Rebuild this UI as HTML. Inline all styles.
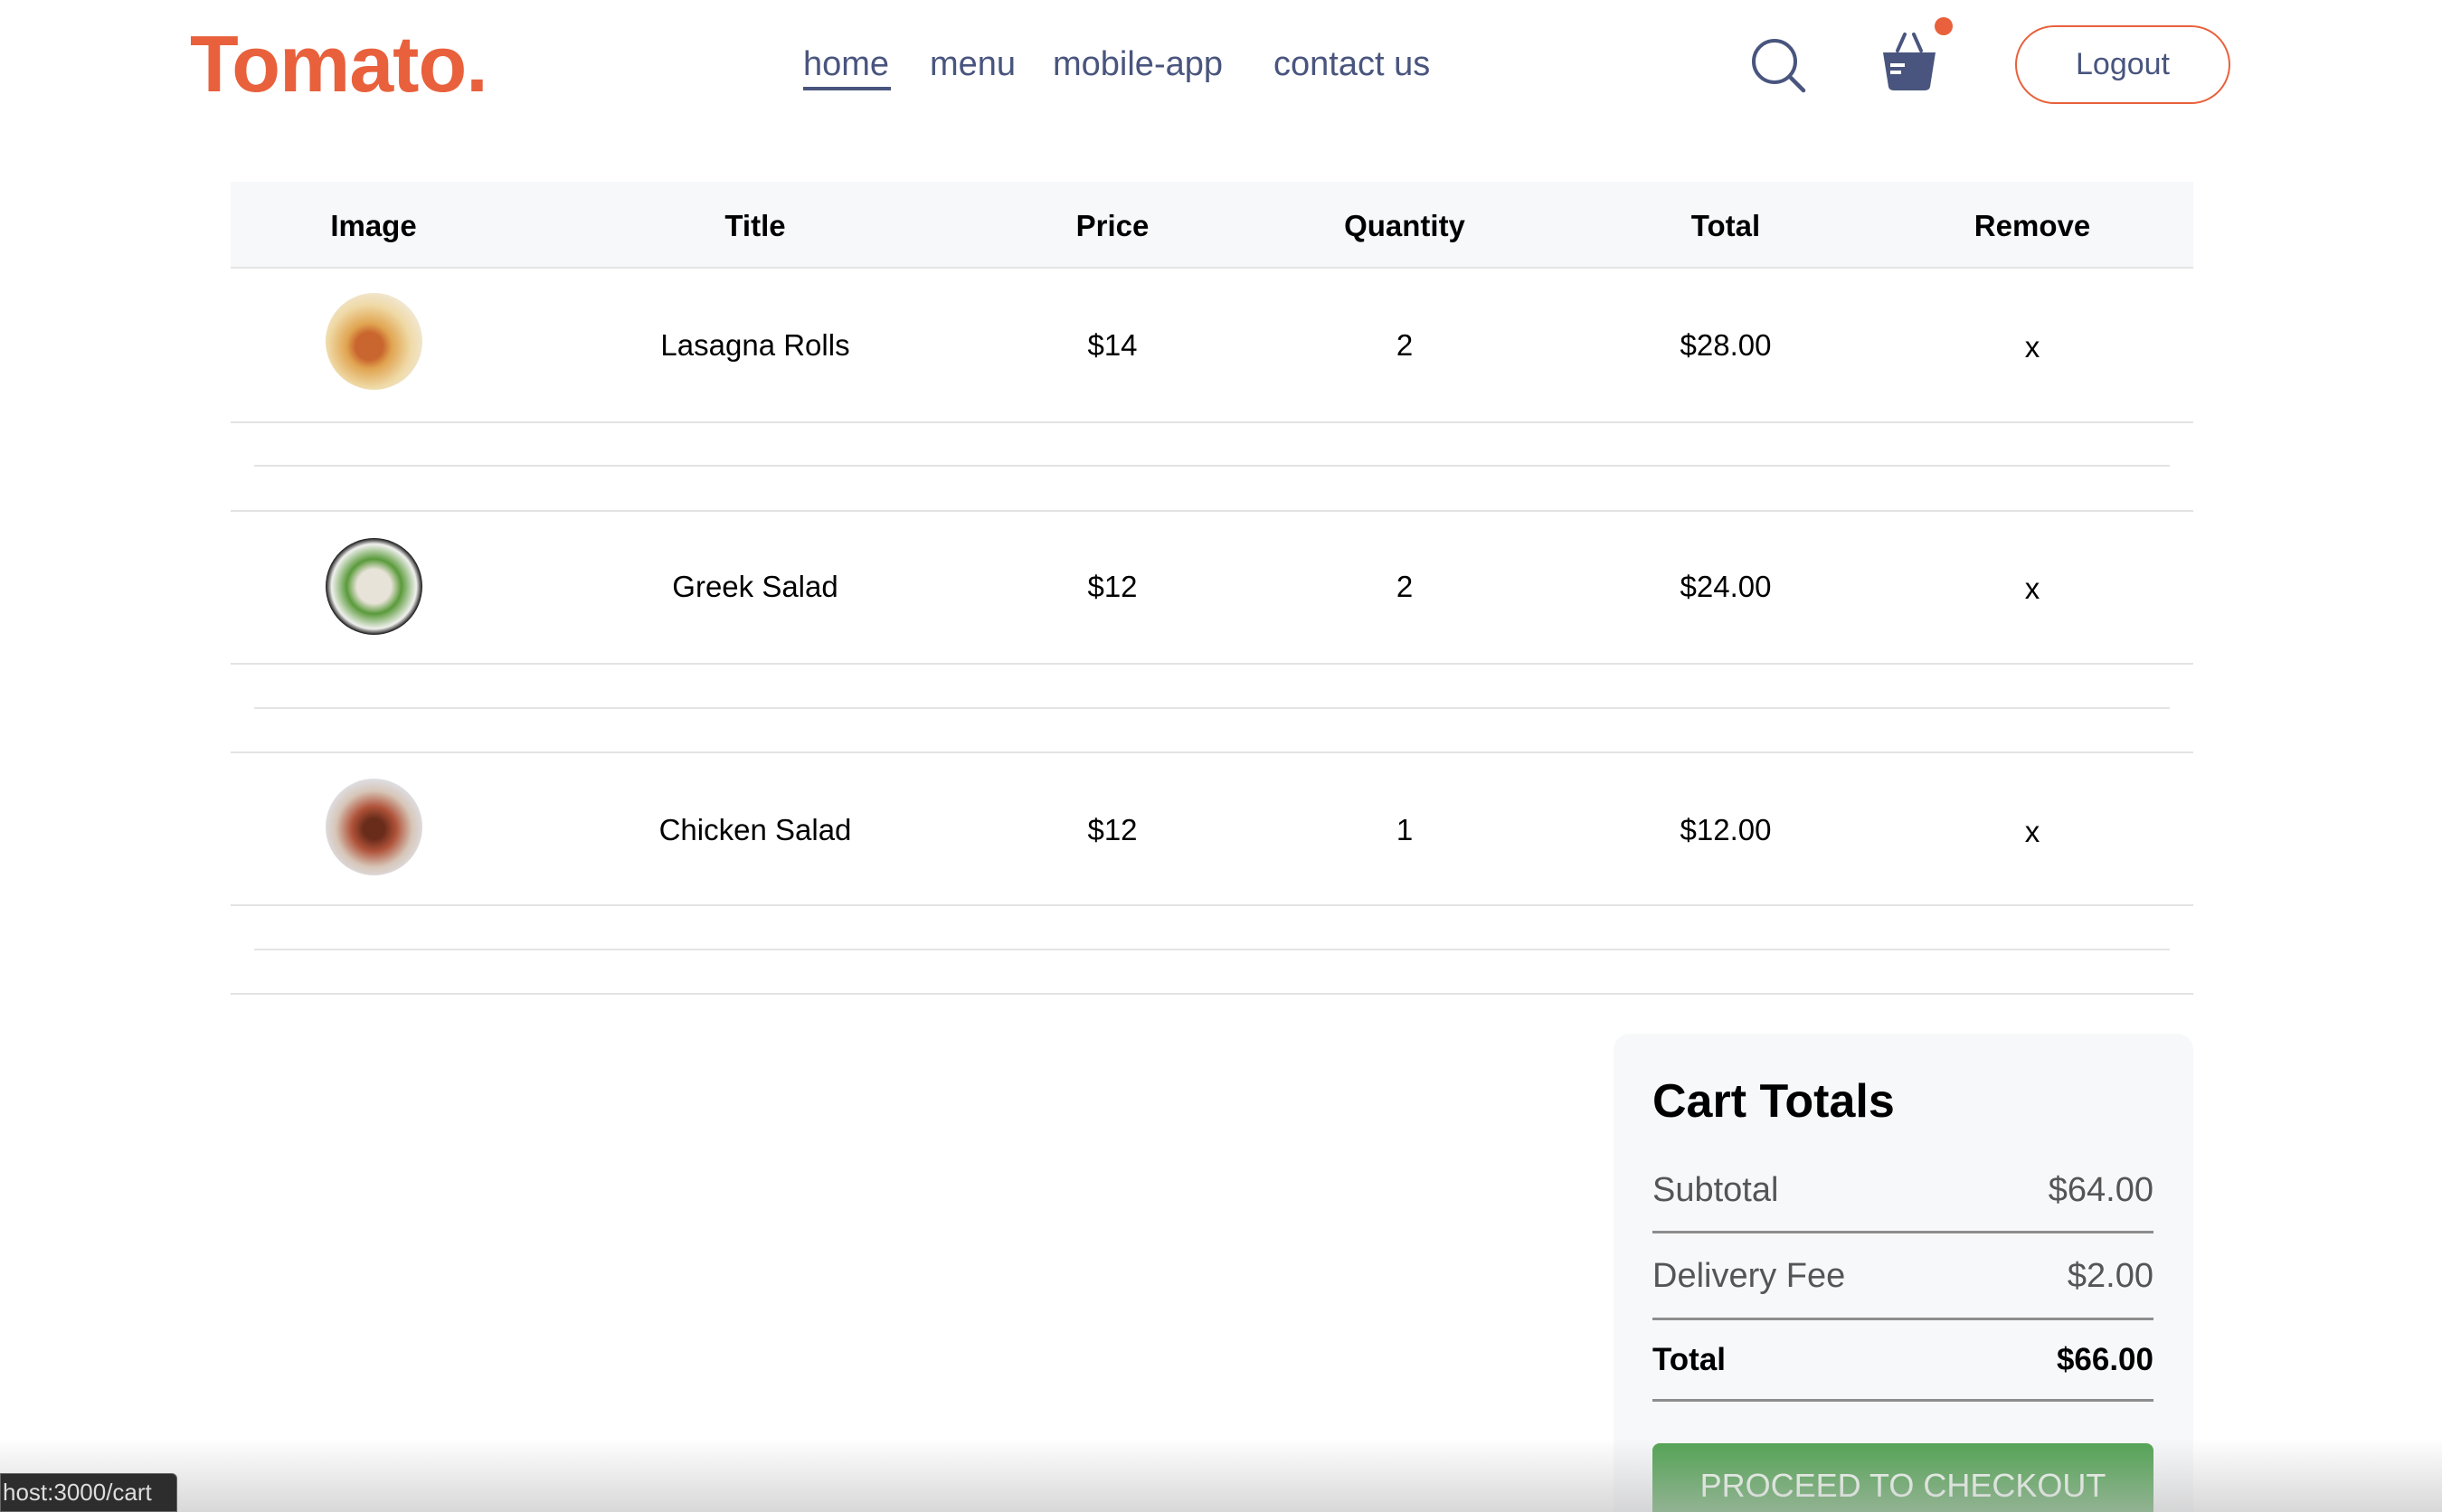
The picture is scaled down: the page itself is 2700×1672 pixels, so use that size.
<!DOCTYPE html>
<html><head><meta charset="utf-8"><style>
*{margin:0;padding:0;box-sizing:border-box}
html,body{width:2700px;height:1672px;overflow:hidden}
body{background:#fff;font-family:"Liberation Sans",sans-serif;position:relative;color:#000}
.a{position:absolute}
.logo{left:210px;top:20px;font-size:88px;font-weight:bold;color:#e8613c;letter-spacing:-1px}
.nav{top:50px;font-size:38px;color:#49557e}
.hl{position:absolute;left:255px;width:2170px;height:2px;background:#e3e3e3}
.sl{position:absolute;left:281px;width:2118px;height:2px;background:#e3e3e3}
.c{position:absolute;transform:translate(-50%,-50%);white-space:nowrap}
.th{font-size:33px;font-weight:bold;top:250px}
.td{font-size:33px}
.img{position:absolute;width:107px;height:107px;border-radius:50%;left:360px}
.row{position:absolute;left:1827px;width:554px;display:flex;justify-content:space-between;font-size:38px;color:#555}
.rl{position:absolute;left:1827px;width:554px;height:3px;background:#8d8d8d}
</style></head><body>
<div class="a logo">Tomato.</div>
<div class="a nav" style="left:888px">home</div>
<div class="a" style="left:888px;top:96px;width:97px;height:4px;background:#49557e"></div>
<div class="a nav" style="left:1028px">menu</div>
<div class="a nav" style="left:1164px">mobile-app</div>
<div class="a nav" style="left:1408px">contact us</div>
<svg class="a" style="left:1934px;top:40px" width="64" height="64" viewBox="0 0 64 64"><circle cx="28" cy="28" r="23" fill="none" stroke="#49557e" stroke-width="4"/><line x1="45" y1="45" x2="60" y2="60" stroke="#49557e" stroke-width="4.5" stroke-linecap="round"/></svg>
<svg class="a" style="left:2080px;top:34px" width="62" height="68" viewBox="0 0 62 68"><path d="M18 22 L26 4 M44 22 L36 4" stroke="#49557e" stroke-width="4" fill="none" stroke-linecap="round"/><path d="M2 24 H60 L54 62 Q53 66 48 66 H14 Q9 66 8 62 Z" fill="#49557e"/><rect x="10" y="36" width="16" height="4" fill="#fff"/><rect x="10" y="44" width="12" height="4" fill="#fff"/></svg>
<div class="a" style="left:2139px;top:19px;width:20px;height:20px;border-radius:50%;background:#e8613c"></div>
<div class="a" style="left:2228px;top:28px;width:238px;height:87px;border:2px solid #e8613c;border-radius:44px;font-size:34px;color:#49557e;text-align:center;line-height:83px">Logout</div>

<div class="a" style="left:255px;top:201px;width:2170px;height:95px;background:#f7f8fa"></div>
<div class="hl" style="top:295px"></div>
<div class="c th" style="left:413px">Image</div>
<div class="c th" style="left:835px">Title</div>
<div class="c th" style="left:1230px">Price</div>
<div class="c th" style="left:1553px">Quantity</div>
<div class="c th" style="left:1908px">Total</div>
<div class="c th" style="left:2247px">Remove</div>

<div class="img" style="top:324px;background:radial-gradient(circle at 45% 55%,#c9652e 0 18%,#e0a450 30%,#efd9a6 55%,#f2ece0 80%)"></div>
<div class="c td" style="left:835px;top:382px">Lasagna Rolls</div>
<div class="c td" style="left:1230px;top:382px">$14</div>
<div class="c td" style="left:1553px;top:382px">2</div>
<div class="c td" style="left:1908px;top:382px">$28.00</div>
<div class="c td" style="left:2247px;top:384px">x</div>
<div class="hl" style="top:466px"></div><div class="sl" style="top:514px"></div><div class="hl" style="top:564px"></div>

<div class="img" style="top:595px;background:radial-gradient(circle at 50% 50%,#e8e3d8 0 25%,#5a9a3a 40%,#f0f0ee 62%,#222 70%,#555 85%,#888 100%)"></div>
<div class="c td" style="left:835px;top:649px">Greek Salad</div>
<div class="c td" style="left:1230px;top:649px">$12</div>
<div class="c td" style="left:1553px;top:649px">2</div>
<div class="c td" style="left:1908px;top:649px">$24.00</div>
<div class="c td" style="left:2247px;top:651px">x</div>
<div class="hl" style="top:733px"></div><div class="sl" style="top:782px"></div><div class="hl" style="top:831px"></div>

<div class="img" style="top:861px;background:radial-gradient(circle at 50% 52%,#6a2c1a 0 15%,#b0533a 32%,#d7c6b8 55%,#dfe2ea 75%)"></div>
<div class="c td" style="left:835px;top:918px">Chicken Salad</div>
<div class="c td" style="left:1230px;top:918px">$12</div>
<div class="c td" style="left:1553px;top:918px">1</div>
<div class="c td" style="left:1908px;top:918px">$12.00</div>
<div class="c td" style="left:2247px;top:920px">x</div>
<div class="hl" style="top:1000px"></div><div class="sl" style="top:1049px"></div><div class="hl" style="top:1098px"></div>

<div class="a" style="left:1784px;top:1143px;width:641px;height:529px;background:#f7f8fa;border-radius:18px 18px 0 0"></div>
<div class="a" style="left:1827px;top:1188px;font-size:52px;font-weight:bold">Cart Totals</div>
<div class="row" style="top:1295px"><span>Subtotal</span><span>$64.00</span></div>
<div class="rl" style="top:1361px"></div>
<div class="row" style="top:1390px"><span>Delivery Fee</span><span>$2.00</span></div>
<div class="rl" style="top:1457px"></div>
<div class="row" style="top:1484px;color:#000;font-weight:bold;font-size:35px"><span>Total</span><span>$66.00</span></div>
<div class="rl" style="top:1547px"></div>
<div class="a" style="left:1827px;top:1596px;width:554px;height:76px;background:#51a252;border-radius:8px 8px 0 0;color:#f0f8f0;font-size:36px;text-align:center;padding-top:26px">PROCEED TO CHECKOUT</div>
<div class="a" style="left:0;top:1590px;width:2700px;height:82px;background:linear-gradient(rgba(200,200,200,0),rgba(190,190,190,.6))"></div>
<div class="a" style="left:0;top:1629px;width:196px;height:43px;background:#2d2d2d;border:1px solid #666;border-radius:0 6px 0 0;color:#ddd;font-size:26px;line-height:41px;padding-left:2px">host:3000/cart</div>
</body></html>
